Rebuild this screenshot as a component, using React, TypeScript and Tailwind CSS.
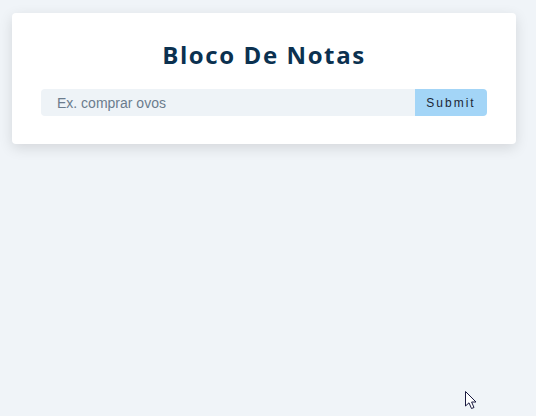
export default function App() {
  return (
    <div className="relative min-h-[416px] bg-[#f0f4f8] pt-[13px] pl-[12px] font-['Liberation_Sans',sans-serif]">
      <div className="w-[504px] rounded-[4px] bg-white px-[29px] pt-[24px] pb-[28px] shadow-[0_4px_14px_rgba(0,0,0,0.12)]">
        <h1 className="mb-[16px] text-center font-['Open_Sans',sans-serif] text-[24px] font-bold leading-[36px] tracking-[1.6px] text-[#0b3150]">
          Bloco De Notas
        </h1>
        <form className="flex h-[27px]" onSubmit={(e) => e.preventDefault()}>
          <input
            type="text"
            placeholder="Ex. comprar ovos"
            className="h-full flex-1 rounded-l-[4px] bg-[#eef3f7] px-[16px] text-[14px] text-[#334155] outline-none placeholder:text-[#6b7c8d]"
          />
          <button
            type="submit"
            className="h-full w-[72px] rounded-r-[4px] bg-[#a3d5f7] text-[12px] tracking-[2px] text-[#1b2636]"
          >
            Submit
          </button>
        </form>
      </div>
      <svg
        className="absolute left-[465px] top-[391px]"
        width="13"
        height="20"
        viewBox="0 0 13 20"
      >
        <path
          d="M0.5 0.5 L0.5 15 L4 11.8 L6.5 17.5 L9 16.5 L6.6 11 L11 11 Z"
          fill="white"
          stroke="#1a1a40"
          strokeWidth="1"
          strokeLinejoin="round"
        />
      </svg>
    </div>
  );
}
